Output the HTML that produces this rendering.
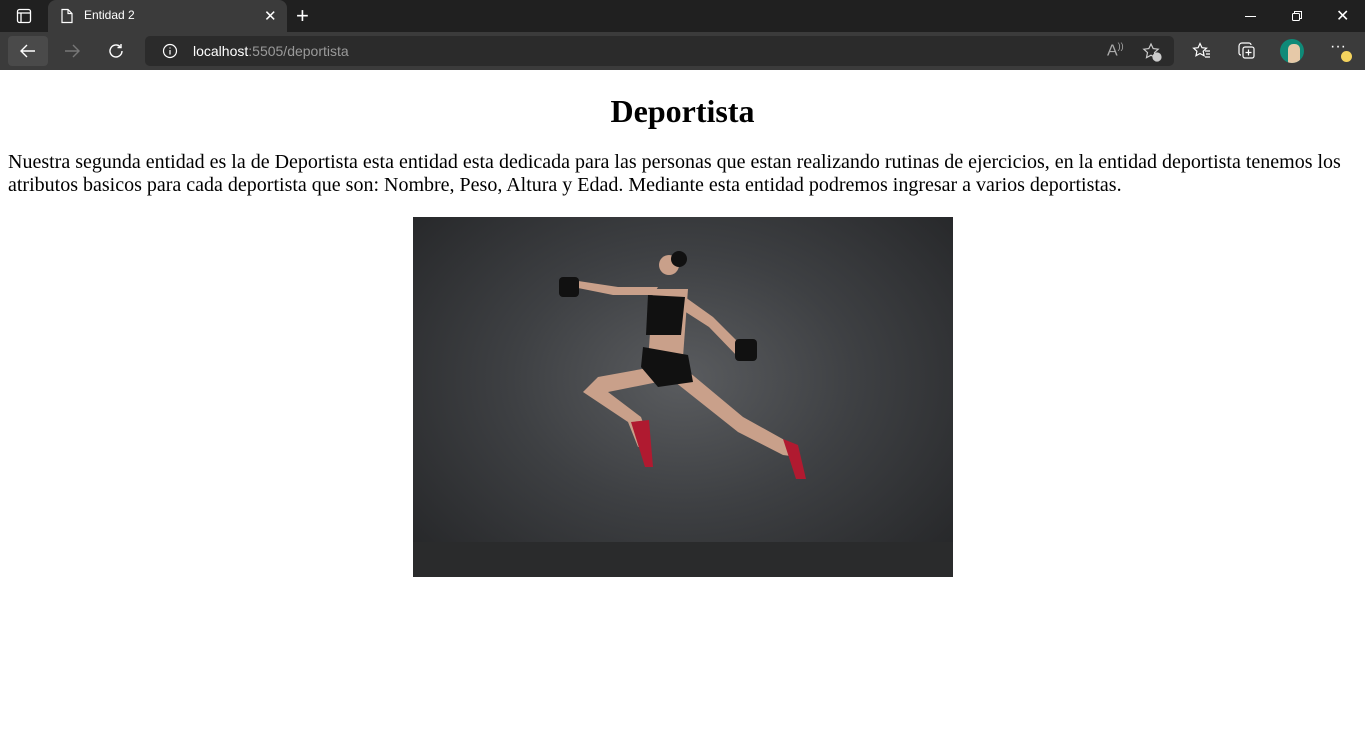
<!DOCTYPE html>
<html><head><meta charset="utf-8"><style>
*{margin:0;padding:0;box-sizing:border-box}
body{width:1365px;height:735px;overflow:hidden;background:#fff;position:relative;font-family:"Liberation Serif",serif}
.tabs{position:absolute;left:0;top:0;width:1365px;height:32px;background:#202020}
.tab{position:absolute;left:48px;top:0;width:239px;height:32px;background:#3b3b3b;border-radius:8px 8px 0 0;color:#fff;font:12px "Liberation Sans",sans-serif}
.bar{position:absolute;left:0;top:32px;width:1365px;height:38px;background:#3b3b3b}
.addr{position:absolute;left:145px;top:4px;width:1029px;height:30px;background:#2b2b2b;border-radius:5px;font:14px "Liberation Sans",sans-serif;color:#9a9a9a}
.ic{position:absolute}
h1{position:absolute;left:0;width:1365px;top:92px;text-align:center;font-size:32px;font-weight:bold;line-height:38px}
p{position:absolute;left:8px;top:151px;width:1352px;font-size:20px;line-height:23px}
.img{position:absolute;left:413px;top:217px;width:540px;height:360px;background:radial-gradient(ellipse at 50% 45%,#5a5c5f 0%,#3e4043 45%,#232426 100%)}
</style></head><body>
<div class="tabs">
<svg class="ic" style="left:16px;top:8px" width="16" height="16" viewBox="0 0 16 16" fill="none" stroke="#fff" stroke-width="1.3"><rect x="1.5" y="1.5" width="13" height="13" rx="2"/><line x1="1.5" y1="5" x2="14.5" y2="5"/><line x1="5" y1="5" x2="5" y2="14.5"/></svg>
<div class="tab">
<svg class="ic" style="left:12px;top:8px" width="14" height="16" viewBox="0 0 14 16" fill="none" stroke="#fff" stroke-width="1.2"><path d="M2 1.5h6l4 4v9H2z M8 1.5v4h4"/></svg>
<span style="position:absolute;left:36px;top:8px">Entidad 2</span>
<span style="position:absolute;left:216px;top:7px;font-size:15px">✕</span>
</div>
<span style="position:absolute;left:296px;top:3px;color:#fff;font:22px 'Liberation Sans',sans-serif">+</span>
<div style="position:absolute;left:1245px;top:16px;width:11px;height:1px;background:#fff"></div>
<svg class="ic" style="left:1291px;top:10px" width="12" height="12" viewBox="0 0 12 12" fill="none" stroke="#fff"><rect x="1.5" y="3.5" width="7" height="7" rx="1"/><path d="M3.5 3.5V1.5h7v7h-2"/></svg>
<span style="position:absolute;left:1336px;top:6px;color:#fff;font:16px 'Liberation Sans',sans-serif">✕</span>
</div>
<div class="bar">
<div style="position:absolute;left:8px;top:4px;width:40px;height:30px;background:#4a4a4a;border-radius:4px"></div>
<svg class="ic" style="left:19px;top:10px" width="18" height="18" viewBox="0 0 18 18" fill="none" stroke="#fff" stroke-width="1.4"><path d="M16 9H2M8 3L2 9l6 6"/></svg>
<svg class="ic" style="left:63px;top:10px" width="18" height="18" viewBox="0 0 18 18" fill="none" stroke="#777" stroke-width="1.4"><path d="M2 9h14M10 3l6 6-6 6"/></svg>
<svg class="ic" style="left:107px;top:10px" width="18" height="18" viewBox="0 0 18 18" fill="none" stroke="#fff" stroke-width="1.4"><path d="M15 9a6 6 0 1 1-2-4.5M14 2v3.5h-3.5"/></svg>
<div class="addr">
<svg class="ic" style="left:17px;top:7px" width="16" height="16" viewBox="0 0 16 16" fill="none" stroke="#fff" stroke-width="1.2"><circle cx="8" cy="8" r="6.5"/><path d="M8 7v4.5M8 4.5v1"/></svg>
<span style="position:absolute;left:48px;top:7px"><span style="color:#fff">localhost</span>:5505/deportista</span>
<span style="position:absolute;left:962px;top:5px;color:#aaa;font-size:16px">A<sup style="font-size:9px">))</sup></span>
<svg class="ic" style="left:997px;top:6px" width="20" height="20" viewBox="0 0 20 20" fill="none" stroke="#ccc" stroke-width="1.2"><path d="M9 2l2.2 4.6 5 .6-3.7 3.4 1 5L9 13.2 4.5 15.6l1-5L1.8 7.2l5-.6z"/><circle cx="15" cy="15" r="4" fill="#ccc"/></svg>
</div>
<svg class="ic" style="left:1192px;top:10px" width="20" height="18" viewBox="0 0 20 18" fill="none" stroke="#fff" stroke-width="1.2"><path d="M8 1.5l2 4.2 4.5.5-3.3 3 .9 4.5L8 11.5l-4 2.2.9-4.5-3.3-3 4.5-.5z"/><path d="M13 9h5M14 12h4M13 15h5"/></svg>
<svg class="ic" style="left:1237px;top:9px" width="20" height="20" viewBox="0 0 20 20" fill="none" stroke="#fff" stroke-width="1.2"><rect x="6" y="6" width="11" height="11" rx="2"/><path d="M14 4a2 2 0 0 0-2-2H5a3 3 0 0 0-3 3v7a2 2 0 0 0 2 2M11.5 8.5v6M8.5 11.5h6"/></svg>
<div style="position:absolute;left:1280px;top:7px;width:24px;height:24px;border-radius:50%;background:#0f8a78;overflow:hidden"><div style="position:absolute;left:8px;top:5px;width:12px;height:19px;background:#e6c9a8;border-radius:5px 5px 0 0"></div></div>
<span style="position:absolute;left:1330px;top:6px;color:#fff;font:16px 'Liberation Sans',sans-serif">···</span>
<div style="position:absolute;left:1341px;top:19px;width:11px;height:11px;border-radius:50%;background:#f4d35e"></div>
</div>
<h1>Deportista</h1>
<p>Nuestra segunda entidad es la de Deportista esta entidad esta dedicada para las personas que estan realizando rutinas de ejercicios, en la entidad deportista tenemos los atributos basicos para cada deportista que son: Nombre, Peso, Altura y Edad. Mediante esta entidad podremos ingresar a varios deportistas.</p>
<div class="img">
<div style="position:absolute;left:0;top:325px;width:540px;height:35px;background:#2a2b2c"></div>
<svg width="540" height="360" viewBox="0 0 540 360" style="position:absolute;left:0;top:0">
<g fill="#c9a08a">
<circle cx="256" cy="48" r="10"/>
<path d="M240 72 L275 72 L270 140 L235 145 Z"/>
<path d="M240 78 L200 78 L150 68 L152 62 L205 70 L245 70Z"/>
<path d="M272 80 L300 100 L330 130 L335 140 L325 140 L296 110 L268 92Z"/>
<path d="M240 150 L185 160 L170 175 L215 205 L225 230 L238 228 L228 200 L195 175 L245 165Z"/>
<path d="M270 150 L330 200 L375 225 L385 240 L370 238 L325 215 L262 165Z"/>
</g>
<g fill="#111"><path d="M235 78 L272 80 L268 118 L233 118Z"/><path d="M230 130 L275 138 L280 165 L245 170 L228 150Z"/><rect x="146" y="60" width="20" height="20" rx="4"/><rect x="322" y="122" width="22" height="22" rx="4"/><circle cx="266" cy="42" r="8"/></g>
<g fill="#b01a30"><path d="M218 205 L236 203 L240 250 L232 250 Z"/><path d="M370 222 L385 228 L393 262 L383 262 Z"/></g>
</svg>
</div>
</body></html>
